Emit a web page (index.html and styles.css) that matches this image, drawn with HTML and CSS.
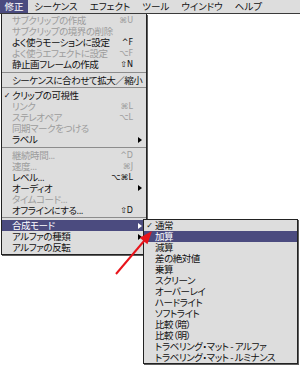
FILE: index.html
```html
<!DOCTYPE html>
<html lang="ja">
<head>
  <meta charset="UTF-8">
  <title>修正メニュー</title>
  <link rel="stylesheet" href="styles.css">
</head>
<body>
  <div class="screen">
    <!-- メニューバー -->
    <div class="menubar">
      <span class="title active">修正</span>
      <span class="title">シーケンス</span>
      <span class="title">エフェクト</span>
      <span class="title">ツール</span>
      <span class="title">ウインドウ</span>
      <span class="title">ヘルプ</span>
    </div>

    <!-- 修正メニュー -->
    <div class="menu main">
      <div class="item off"><span class="mark"></span><span class="label">サブクリップの作成</span><span class="key">⌘U</span><span class="sub"></span></div>
      <div class="item off"><span class="mark"></span><span class="label">サブクリップの境界の削除</span><span class="key"></span><span class="sub"></span></div>
      <div class="item"><span class="mark"></span><span class="label">よく使うモーションに設定</span><span class="key">^F</span><span class="sub"></span></div>
      <div class="item off"><span class="mark"></span><span class="label">よく使うエフェクトに設定</span><span class="key">⌥F</span><span class="sub"></span></div>
      <div class="item"><span class="mark"></span><span class="label">静止画フレームの作成</span><span class="key">⇧N</span><span class="sub"></span></div>
      <div class="sep"></div>
      <div class="item wide"><span class="mark"></span><span class="label">シーケンスに合わせて拡大／縮小</span></div>
      <div class="sep"></div>
      <div class="item"><span class="mark">✓</span><span class="label">クリップの可視性</span><span class="key"></span><span class="sub"></span></div>
      <div class="item off"><span class="mark"></span><span class="label">リンク</span><span class="key">⌘L</span><span class="sub"></span></div>
      <div class="item off"><span class="mark"></span><span class="label">ステレオペア</span><span class="key">⌥L</span><span class="sub"></span></div>
      <div class="item off"><span class="mark"></span><span class="label">同期マークをつける</span><span class="key"></span><span class="sub"></span></div>
      <div class="item"><span class="mark"></span><span class="label">ラベル</span><span class="key"></span><span class="sub"><i class="tri"></i></span></div>
      <div class="sep"></div>
      <div class="item off"><span class="mark"></span><span class="label">継続時間...</span><span class="key">^D</span><span class="sub"></span></div>
      <div class="item off"><span class="mark"></span><span class="label">速度...</span><span class="key">⌘J</span><span class="sub"></span></div>
      <div class="item"><span class="mark"></span><span class="label">レベル...</span><span class="key">⌥⌘L</span><span class="sub"></span></div>
      <div class="item"><span class="mark"></span><span class="label">オーディオ</span><span class="key"></span><span class="sub"><i class="tri"></i></span></div>
      <div class="item off"><span class="mark"></span><span class="label">タイムコード...</span><span class="key"></span><span class="sub"></span></div>
      <div class="item"><span class="mark"></span><span class="label">オフラインにする...</span><span class="key">⇧D</span><span class="sub"></span></div>
      <div class="sep"></div>
      <div class="item hl"><span class="mark"></span><span class="label">合成モード</span><span class="key"></span><span class="sub"><i class="tri"></i></span></div>
      <div class="item"><span class="mark"></span><span class="label">アルファの種類</span><span class="key"></span><span class="sub"><i class="tri"></i></span></div>
      <div class="item"><span class="mark"></span><span class="label">アルファの反転</span><span class="key"></span><span class="sub"></span></div>
    </div>

    <!-- 合成モード サブメニュー -->
    <div class="menu submenu">
      <div class="item"><span class="mark">✓</span><span class="label">通常</span></div>
      <div class="item hl"><span class="mark"></span><span class="label">加算</span></div>
      <div class="item"><span class="mark"></span><span class="label">減算</span></div>
      <div class="item"><span class="mark"></span><span class="label">差の絶対値</span></div>
      <div class="item"><span class="mark"></span><span class="label">乗算</span></div>
      <div class="item"><span class="mark"></span><span class="label">スクリーン</span></div>
      <div class="item"><span class="mark"></span><span class="label">オーバーレイ</span></div>
      <div class="item"><span class="mark"></span><span class="label">ハードライト</span></div>
      <div class="item"><span class="mark"></span><span class="label">ソフトライト</span></div>
      <div class="item"><span class="mark"></span><span class="label">比較（暗）</span></div>
      <div class="item"><span class="mark"></span><span class="label">比較（明）</span></div>
      <div class="item"><span class="mark"></span><span class="label">トラベリング・マット - アルファ</span></div>
      <div class="item"><span class="mark"></span><span class="label">トラベリング・マット - ルミナンス</span></div>
    </div>

    <!-- 赤い矢印 -->
    <svg class="pointer" width="50" height="56" viewBox="0 0 50 56">
      <line x1="6" y1="49" x2="34" y2="16" stroke="#e8141b" stroke-width="2"/>
      <polygon points="42,6 37.4,19.2 29.8,12.8" fill="#e8141b"/>
    </svg>
  </div>
</body>
</html>
```

FILE: styles.css
```css
/* 全体 */
* { box-sizing: border-box; }
body {
  margin: 0;
  background: #fff;
  font-family: "Noto Sans CJK JP", "DejaVu Sans", sans-serif;
  font-size: 9.5px;
  font-feature-settings: "palt" 1;
  color: #111;
}
.screen {
  position: relative;
  width: 300px;
  height: 366px;
  overflow: hidden;
}

/* メニューバー */
.menubar {
  display: flex;
  height: 14px;
  background: #dddddd;
  border-bottom: 1px solid #3a3a3a;
}
.menubar .title {
  padding: 0 4px;
  margin-right: 4px;
  line-height: 13px;
}
.menubar .title.active {
  background: #4b4b7f;
  color: #fff;
  padding: 0 4.5px;
  margin-right: 2px;
}

/* メニュー */
.menu {
  background: #dddddd;
  border: 1px solid #222;
  box-shadow: 1px 1px 0 #5e5e5e;
}
.main {
  width: 146px;
  margin-left: 1px;
  border-top: none;
  padding: 1px 0;
}
.item {
  display: grid;
  grid-template-columns: 10px minmax(0, 1fr) auto 13px;
  align-items: center;
  height: 11px;
  line-height: 11px;
  white-space: nowrap;
}
.item .label { letter-spacing: -0.45px; }
.item.wide .label { grid-column: 2 / 5; }
.item .mark {
  font-family: "DejaVu Sans", sans-serif;
  font-size: 8px;
  font-weight: bold;
  text-align: center;
}
.item .key {
  font-family: "DejaVu Sans", sans-serif;
  font-size: 8px;
}
.item .sub { padding-left: 5px; display: flex; align-items: center; }
.tri {
  display: block;
  width: 0;
  height: 0;
  border-left: 4px solid #000;
  border-top: 3.5px solid transparent;
  border-bottom: 3.5px solid transparent;
}
.item.off { color: #9c9c9c; }
.item.hl { background: #4b4b7f; color: #fff; }
.item.hl .tri { border-left-color: #fff; }
.sep {
  height: 4.5px;
  display: flex;
  align-items: center;
}
.sep::after {
  content: "";
  flex: 1;
  height: 1px;
  background: #8c8c8c;
}

/* サブメニュー */
.submenu {
  position: absolute;
  top: 219px;
  left: 143px;
  width: 155px;
}
.submenu .item { grid-template-columns: 11px minmax(0, 1fr); }

/* 矢印 */
.pointer {
  position: absolute;
  left: 110px;
  top: 225px;
}
```
